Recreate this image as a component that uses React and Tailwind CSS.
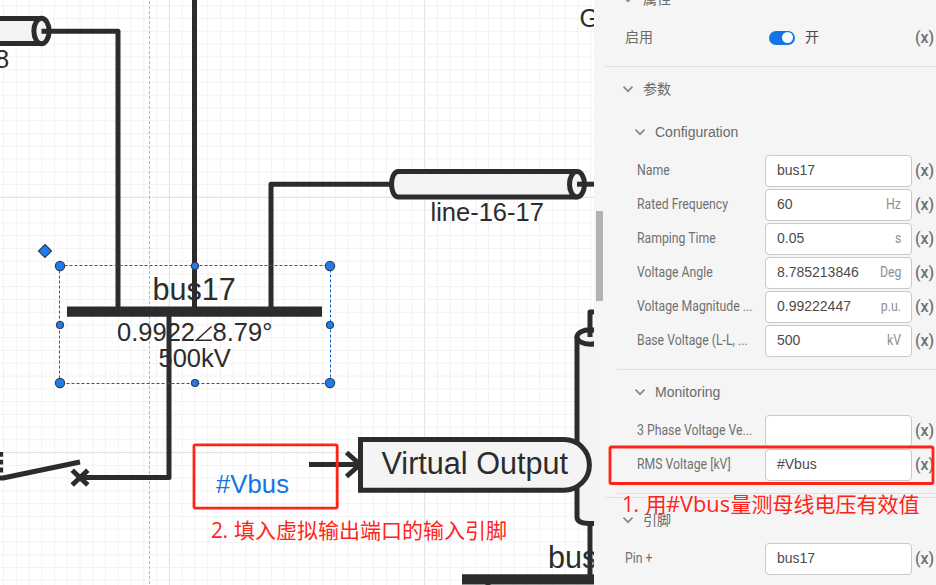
import React from "react";

const INK = "#2c2c2c";
const FILL = "#f4f4f4";

function Grid() {
  const step = 12.765;
  const lines = [];
  for (let i = -13; i < 34; i++) {
    const x = 169.4 + i * step;
    lines.push(<line key={"v" + i} x1={x} x2={x} y1="0" y2="585" stroke={i % 20 === 0 ? "#dfdfdf" : "#f2f2f2"} />);
  }
  for (let i = -15; i < 31; i++) {
    const y = 197.3 + i * step;
    lines.push(<line key={"h" + i} x1="0" x2="594" y1={y} y2={y} stroke={i % 20 === 0 ? "#dfdfdf" : "#f2f2f2"} />);
  }
  return <g>{lines}</g>;
}

const handles = [
  [60, 266, 4.6], [330, 266, 4.6], [60, 383, 4.6], [330, 383, 4.6],
  [195, 266, 3.5], [195, 383, 3.5], [60, 325, 3.5], [330, 325, 3.5],
];

function Diagram() {
  return (
    <svg className="block h-[585px] w-[594px] shrink-0 bg-white font-['Liberation_Sans',sans-serif]" viewBox="0 0 594 585">
      <Grid />
      <line x1="149.5" x2="149.5" y1="1" y2="585" stroke="#b5b5b5" strokeDasharray="3 2" />

      <g fill="none" stroke={INK} strokeWidth="5" strokeLinejoin="round">
        {/* left cable */}
        <path d="M-5 18.5H41.5V43.5H-5" fill={FILL} />
        <ellipse cx="41.5" cy="31" rx="7.6" ry="12.8" fill={FILL} />
        <path d="M41.5 31.2H118V309" />
        {/* feeders */}
        <path d="M194.5 0V309" />
        <path d="M391 184.2H271V309" />
        <path d="M169 314V477.5H80" />
        {/* line-16-17 */}
        <path d="M577 171.5H398C389.4 172.5 389.4 196 398 197H577" fill={FILL} />
        <ellipse cx="577" cy="184.2" rx="7.5" ry="12.7" fill={FILL} />
        <path d="M577 184.2H594" />
        {/* switch */}
        <path d="M-2 478H3L80 462" />
        <path d="M72.2 470.2L87.8 485M87.8 470.2L72.2 485" />
        <path d="M1.5 452V473" strokeWidth="3.2" strokeDasharray="4.8 3" />
        {/* right vertical cable */}
        <path d="M577 337V517C577 522 584 523.5 590 523.5H600V337Z" fill={FILL} />
        <ellipse cx="590" cy="337" rx="13" ry="7.2" fill={FILL} />
        <path d="M590 337V312H600M590 523V578" />
        {/* virtual output */}
        <path d="M309 464.5H360M346.5 452.5L360 464.5L346.5 476.5" strokeLinejoin="miter" />
        <path d="M360.5 439.6H564A25.4 25.3 0 0 1 564 490.2H360.5Z" fill={FILL} strokeLinejoin="miter" />
      </g>
      <path d="M67 306.5H322V316.8H67ZM462 574.2H594V584.5H462ZM485.5 584H490.5V585H485.5Z" fill={INK} />

      <g fill={INK} fontSize="25.5">
        <text x="-5" y="68">8</text>
        <text x="579.5" y="26.5">G</text>
        <text x="430.5" y="220.5">line-16-17</text>
        <text x="117" y="340.5">0.9922</text>
        <path d="M211.5 326.5L196.5 340.3H211.8" fill="none" stroke={INK} strokeWidth="1.5" />
        <text x="212.5" y="340.5">8.79°</text>
        <text x="158.5" y="366.5">500kV</text>
        <text x="152.5" y="299.5" fontSize="30.6">bus17</text>
        <text x="381.5" y="474" fontSize="30.6">Virtual Output</text>
        <text x="548" y="567.5" fontSize="30.6">bus</text>
        <text x="216" y="493" fill="#1473e6" fontSize="25.6" textLength="73">#Vbus</text>
      </g>

      <rect x="59.5" y="265.5" width="271" height="118" fill="none" stroke="#0d5fc0" strokeDasharray="3 2" />
      {handles.map(([x, y, r]) => (
        <circle key={x + "-" + y} cx={x} cy={y} r={r} fill="#1f7cf0" stroke="#2f4258" strokeWidth="1.2" />
      ))}
      <path d="M45 244.5L51.5 251L45 257.5L38.5 251Z" fill="#1f7cf0" stroke="#2f4258" strokeWidth="1.2" />
    </svg>
  );
}

function Chevron() {
  return (
    <svg className="h-3 w-3 shrink-0" viewBox="0 0 12 12" fill="none" stroke="#8a8a8a" strokeWidth="1.7">
      <path d="M1.5 3.7L6 8.2L10.5 3.7" />
    </svg>
  );
}

function Section({ title, className }) {
  return (
    <div className={"flex shrink-0 items-center text-sm text-[#6a6a6a] " + className}>
      <Chevron />
      <span className="ml-[9px]">{title}</span>
    </div>
  );
}

function Expr() {
  return <span className="ml-[3px] w-[18px] shrink-0 font-['Roboto'] text-base leading-none font-medium text-[#707070]">(x)</span>;
}

function Field({ label, value, unit, outer }) {
  return (
    <div className={"flex h-[34px] shrink-0 items-center " + (outer ? "pl-[31px]" : "pl-[43px]")}>
      <div className={"shrink-0 pb-[2px] " + (outer ? "w-[140px]" : "w-[128px]")}>
        <span className="inline-block origin-left scale-x-[.875] font-['Roboto'] text-sm whitespace-nowrap text-[#707070]">{label}</span>
      </div>
      <div className="flex h-8 w-[147px] shrink-0 items-center justify-between rounded-[4px] border border-[#c9c9c9] bg-white pr-[10px] pb-[2px] pl-[11px] text-sm text-[#4b4b4b]">
        <span>{value}</span>
        <span className="inline-block origin-right scale-x-[.875] font-['Roboto'] text-[#8e8e8e]">{unit}</span>
      </div>
      <Expr />
    </div>
  );
}

function Properties() {
  return (
    <aside className="flex h-[585px] w-[342px] shrink-0 overflow-hidden bg-[#f5f5f5] font-['Liberation_Sans','Noto_Sans_CJK_SC',sans-serif]">
      <div className="mt-[211px] ml-[2px] h-[90px] w-[7px] shrink-0 bg-[#b3b3b3]" />
      <div className="-ml-[9px] flex w-[342px] shrink-0 flex-col">
        <Section title="属性" className="-mt-[17px] h-[32px] pl-[28px]" />
        <div className="flex h-[51px] shrink-0 items-center pb-[6px] pl-[31px] text-sm text-[#6a6a6a]">
          <span className="w-[144px] pb-[2px]">启用</span>
          <div className="flex h-[14px] w-[26px] items-center justify-end rounded-full bg-[#1473e6] pr-[2px]">
            <div className="h-[11px] w-[11px] rounded-full bg-[#fafafa]" />
          </div>
          <span className="ml-[10px] w-[107px] pb-[2px] text-[#4b4b4b]">开</span>
          <Expr />
        </div>
        <div className="ml-[11px] h-px shrink-0 bg-[#e0e0e0]" />
        <Section title="参数" className="h-[44px] pl-[28px]" />
        <Section title="Configuration" className="h-[43px] pb-[2px] pl-[40px]" />
        <Field label="Name" value="bus17" />
        <Field label="Rated Frequency" value="60" unit="Hz" />
        <Field label="Ramping Time" value="0.05" unit="s" />
        <Field label="Voltage Angle" value="8.785213846" unit="Deg" />
        <Field label="Voltage Magnitude ..." value="0.99222447" unit="p.u." />
        <Field label="Base Voltage (L-L, ..." value="500" unit="kV" />
        <div className="mt-[11px] ml-[23px] h-px shrink-0 bg-[#e0e0e0]" />
        <Section title="Monitoring" className="h-[44px] pl-[40px]" />
        <Field label="3 Phase Voltage Ve..." value="" />
        <Field label="RMS Voltage [kV]" value="#Vbus" />
        <div className="mt-[11px] ml-[23px] h-px shrink-0 bg-[#e0e0e0]" />
        <div className="mt-[3px] ml-[11px] h-px shrink-0 bg-[#e0e0e0]" />
        <Section title="引脚" className="h-[44px] pl-[28px]" />
        <Field label="Pin +" value="bus17" outer />
      </div>
    </aside>
  );
}

function Annotations() {
  return (
    <svg className="pointer-events-none absolute inset-0 h-[585px] w-[936px] font-['Open_Sans','Noto_Sans_CJK_SC',sans-serif]" viewBox="0 0 936 585">
      <g fill="none" stroke="#ff2418" strokeWidth="2.8">
        <rect x="194" y="444.9" width="143.2" height="63.2" rx="1.5" />
        <rect x="610" y="447" width="323" height="36.5" rx="1.5" />
      </g>
      <g fill="#ff2418" fontSize="21">
        <text x="211" y="537.5" textLength="17">2.</text>
        <text x="234" y="537.5" textLength="273">填入虚拟输出端口的输入引脚</text>
        <text x="622" y="512" textLength="17">1.</text>
        <text x="645.5" y="512">用</text>
        <text x="666" y="512" textLength="64" lengthAdjust="spacingAndGlyphs">#Vbus</text>
        <text x="730.5" y="512" textLength="189">量测母线电压有效值</text>
      </g>
    </svg>
  );
}

export default function App() {
  return (
    <div className="relative flex h-[585px] w-[936px] overflow-hidden bg-white">
      <Diagram />
      <Properties />
      <Annotations />
    </div>
  );
}
